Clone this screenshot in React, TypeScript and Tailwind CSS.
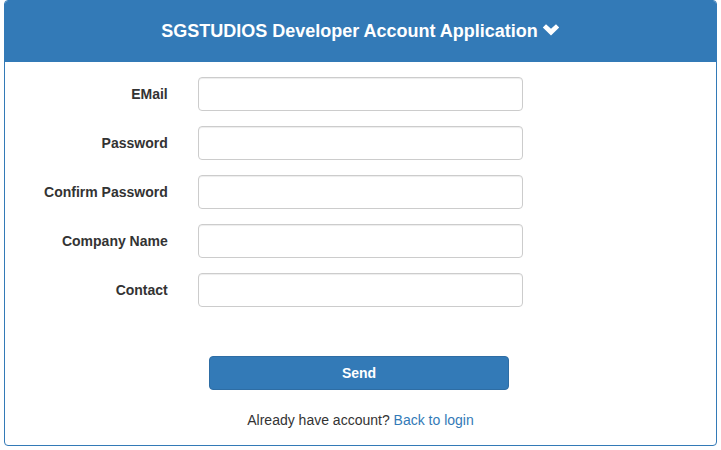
const fields = [
  { id: "email", label: "EMail", type: "email" },
  { id: "password", label: "Password", type: "password" },
  { id: "confirm-password", label: "Confirm Password", type: "password" },
  { id: "company", label: "Company Name", type: "text" },
  { id: "contact", label: "Contact", type: "text" },
];

function ChevronDown() {
  return (
    <svg viewBox="0 0 18 18" className="size-[18px]" fill="currentColor" aria-hidden="true">
      <path d="M0.8 5.4 L4 2.2 L9 6.8 L14 2.2 L17.2 5.4 L9 13.4 Z" />
    </svg>
  );
}

function Field({ id, label, type }: { id: string; label: string; type: string }) {
  return (
    <div className="flex">
      <label htmlFor={id} className="w-1/4 pt-[7px] pr-[15px] text-right font-bold">
        {label}
      </label>
      <div className="w-1/2 px-[15px]">
        <input
          id={id}
          name={id}
          type={type}
          className="block h-[34px] w-full rounded border border-[#cccccc] bg-white px-3 text-[#555555] shadow-[inset_0_1px_1px_rgba(0,0,0,0.075)] outline-none focus:border-[#66afe9]"
        />
      </div>
    </div>
  );
}

export default function App() {
  return (
    <main className="bg-white px-1 font-['Helvetica_Neue',Helvetica,'Liberation_Sans',Arial,sans-serif] text-[14px] leading-5 text-[#333333]">
      <section className="overflow-hidden rounded border border-[#337ab7]">
        <header className="flex items-center justify-center gap-1 bg-[#337ab7] pt-5 pb-[21px] text-white">
          <h1 className="text-[18px] leading-5 font-bold">SGSTUDIOS Developer Account Application</h1>
          <ChevronDown />
        </header>
        <form className="pt-[15px] pb-[15px]" onSubmit={(e) => e.preventDefault()}>
          <div className="flex flex-col gap-[15px]">
            {fields.map((f) => (
              <Field key={f.id} {...f} />
            ))}
          </div>
          <div className="mt-[49px] flex justify-center pr-[3px]">
            <button
              type="submit"
              className="h-[34px] w-[300px] rounded border border-[#2e6da4] bg-[#337ab7] font-bold text-white"
            >
              Send
            </button>
          </div>
          <p className="mt-5 text-center">
            Already have account?{" "}
            <a href="#login" className="text-[#337ab7]">
              Back to login
            </a>
          </p>
        </form>
      </section>
    </main>
  );
}
